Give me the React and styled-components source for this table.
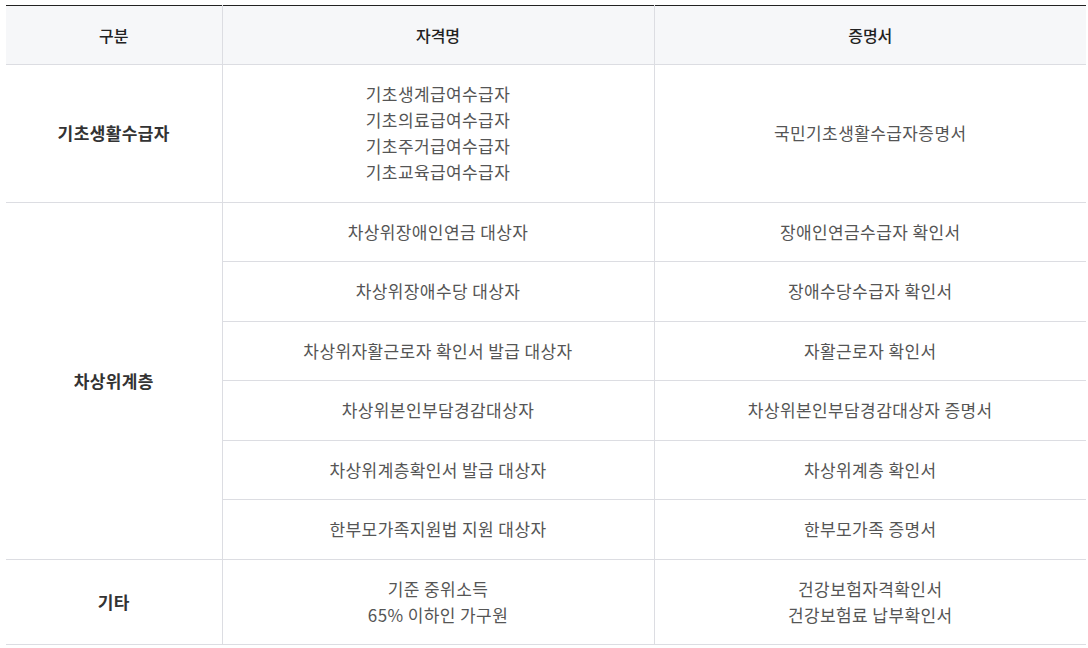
import React from 'react';
import styled, {createGlobalStyle} from 'styled-components';

const GlobalStyle = createGlobalStyle`
    body {
        margin: 0;
        background: #fff;
        font-family: "Noto Sans CJK KR", "Noto Sans", sans-serif;
    }
`;

const Wrap = styled.div`
    padding: 5px 2px 0 6px;
`;

const Table = styled.table`
    width: 1080px;
    border-collapse: collapse;
    table-layout: fixed;
    border-top: 1px solid #222;
    line-height: 26px;
`;

const Th = styled.th`
    background: #f6f7f9;
    color: #222;
    font-size: 16px;
    font-weight: 500;
    padding: 16px 10px;
    border-bottom: 1px solid #dcdde2;
    border-left: ${({$first}) => ($first ? 'none' : '1px solid #dcdde2')};
    text-align: center;
`;

const Td = styled.td`
    color: ${({$head}) => ($head ? '#333' : '#555')};
    font-size: 17px;
    letter-spacing: 0.4px;
    font-weight: ${({$head}) => ($head ? 700 : 400)};
    padding: 16.25px 10px;
    border-bottom: 1px solid #dcdde2;
    border-left: ${({$head}) => ($head ? 'none' : '1px solid #dcdde2')};
    text-align: center;
    vertical-align: middle;
`;

const Line = styled.span`
    display: block;
`;

const lines = (arr) => arr.map((t) => <Line key={t}>{t}</Line>);

const subRows = [
    ['차상위장애인연금 대상자', '장애인연금수급자 확인서'],
    ['차상위장애수당 대상자', '장애수당수급자 확인서'],
    ['차상위자활근로자 확인서 발급 대상자', '자활근로자 확인서'],
    ['차상위본인부담경감대상자', '차상위본인부담경감대상자 증명서'],
    ['차상위계층확인서 발급 대상자', '차상위계층 확인서'],
    ['한부모가족지원법 지원 대상자', '한부모가족 증명서'],
];

const App = () => (
    <>
        <GlobalStyle/>
        <Wrap>
            <Table>
                <colgroup>
                    <col style={{width: '20%'}}/>
                    <col style={{width: '40%'}}/>
                    <col style={{width: '40%'}}/>
                </colgroup>
                <thead>
                    <tr>
                        <Th $first>구분</Th>
                        <Th>자격명</Th>
                        <Th>증명서</Th>
                    </tr>
                </thead>
                <tbody>
                    <tr>
                        <Td $head>기초생활수급자</Td>
                        <Td>{lines(['기초생계급여수급자', '기초의료급여수급자', '기초주거급여수급자', '기초교육급여수급자'])}</Td>
                        <Td>국민기초생활수급자증명서</Td>
                    </tr>
                    {subRows.map(([name, doc], i) => (
                        <tr key={name}>
                            {i === 0 && <Td $head rowSpan={subRows.length}>차상위계층</Td>}
                            <Td>{name}</Td>
                            <Td>{doc}</Td>
                        </tr>
                    ))}
                    <tr>
                        <Td $head>기타</Td>
                        <Td>{lines(['기준 중위소득', '65% 이하인 가구원'])}</Td>
                        <Td>{lines(['건강보험자격확인서', '건강보험료 납부확인서'])}</Td>
                    </tr>
                </tbody>
            </Table>
        </Wrap>
    </>
);

export default App;
